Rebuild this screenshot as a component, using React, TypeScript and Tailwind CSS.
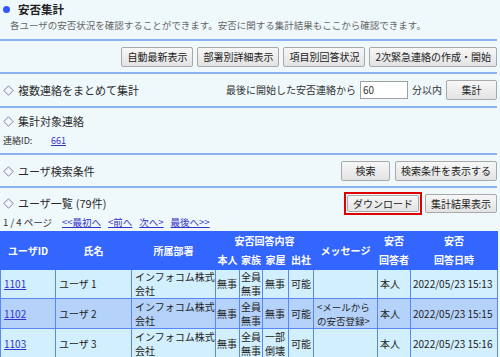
import React from "react";

const font = { fontFamily: '"Noto Sans CJK JP", "Noto Sans", sans-serif' };

function Btn({
  children,
  className = "",
  h = "h-[20px]",
}: {
  children: React.ReactNode;
  className?: string;
  h?: string;
}) {
  return (
    <button
      className={
        h +
        " px-[5px] border border-[#a9a9a9] rounded-[2px] bg-gradient-to-b from-[#f7f7f7] to-[#e3e3e3] text-[10px] leading-none text-[#222] whitespace-nowrap " +
        className
      }
    >
      {children}
    </button>
  );
}

function Line() {
  return <div className="h-[2px] bg-[#8db2f2]" />;
}

function Heading({ children }: { children: React.ReactNode }) {
  return (
    <div className="flex items-center text-[11px] leading-none text-[#2a2a2a]">
      <svg width="11" height="11" viewBox="0 0 11 11" className="ml-[3px] mr-[4px]">
        <path d="M5.5 0.8 L10.2 5.5 L5.5 10.2 L0.8 5.5 Z" fill="none" stroke="#8a7aa8" strokeWidth="1" />
      </svg>
      {children}
    </div>
  );
}

const rows = [
  { id: "1101", name: "ユーザ 1", fam: ["全員", "無事"], house: ["無事"], msg: [], time: "2022/05/23 15:13", bg: "bg-[#d2effd]" },
  { id: "1102", name: "ユーザ 2", fam: ["全員", "無事"], house: ["無事"], msg: ["<メールから", "の安否登録>"], time: "2022/05/23 15:15", bg: "bg-[#b5d3fa]" },
  { id: "1103", name: "ユーザ 3", fam: ["全員", "無事"], house: ["一部", "倒壊"], msg: [], time: "2022/05/23 15:16", bg: "bg-[#d2effd]" },
];

export default function App() {
  return (
    <div className="w-[500px] h-[357px] overflow-hidden bg-[#eff8fb]" style={font}>
      <div className="w-[497px]">
        {/* title */}
        <div className="h-[19px] flex items-center pl-[3px]">
          <span className="w-[7px] h-[7px] rounded-full bg-[#3355ff] mr-[8px]" />
          <span className="text-[11.5px] font-bold text-[#222] leading-none">安否集計</span>
        </div>
        <div className="h-[13px] pl-[10px] flex items-center text-[9.5px] text-[#666] leading-none">
          各ユーザの安否状況を確認することができます。安否に関する集計結果もここから確認できます。
        </div>
        <div className="h-[7px]" />
        <Line />
        {/* button row */}
        <div className="pt-[6px] pb-[5px] flex justify-end gap-[4px]">
          <Btn>自動最新表示</Btn>
          <Btn>部署別詳細表示</Btn>
          <Btn>項目別回答状況</Btn>
          <Btn>2次緊急連絡の作成・開始</Btn>
        </div>
        <Line />
        {/* multi */}
        <div className="pt-[6px] pb-[6px] flex items-center justify-between">
          <Heading>複数連絡をまとめて集計</Heading>
          <div className="flex items-center text-[10px] text-[#333] leading-none">
            <span>最後に開始した安否連絡から</span>
            <div className="ml-[4px] w-[48px] h-[18px] border border-[#a0a0a0] bg-white flex items-center px-[2px] text-[10px]">
              60
            </div>
            <span className="ml-[4px] mr-[4px]">分以内</span>
            <Btn className="w-[51px]">集計</Btn>
          </div>
        </div>
        <Line />
        {/* target */}
        <div className="pt-[5px] pb-[6px]">
          <div className="h-[16px] flex items-center">
            <Heading>集計対象連絡</Heading>
          </div>
          <div className="mt-[4px] h-[14px] flex items-center pl-[3px] text-[9px] text-[#333] leading-none">
            <span className="w-[48px]">連絡ID:</span>
            <a className="text-[#3333cc] underline">661</a>
          </div>
        </div>
        <Line />
        {/* search */}
        <div className="pt-[6px] pb-[5px] flex items-center justify-between">
          <Heading>ユーザ検索条件</Heading>
          <div className="flex gap-[5px]">
            <Btn className="w-[49px]">検索</Btn>
            <Btn>検索条件を表示する</Btn>
          </div>
        </div>
        <Line />
        {/* list */}
        <div className="pt-[4px] flex items-center justify-between">
          <Heading>
            ユーザ一覧 <span className="ml-[3px]">(79件)</span>
          </Heading>
          <div className="flex items-center gap-[3px]">
            <div className="border-[2px] border-[#e00000] p-[1px] flex">
              <Btn h="h-[17px]">ダウンロード</Btn>
            </div>
            <Btn h="h-[19px]">集計結果表示</Btn>
          </div>
        </div>
        <div className="mt-[1px] h-[13px] flex items-center pl-[3px] text-[9.5px] leading-none text-[#333] gap-[7px]">
          <span className="mr-[3px]">1 / 4 ページ</span>
          <a className="text-[#3333cc] underline">&lt;&lt;最初へ</a>
          <a className="text-[#3333cc] underline">&lt;前へ</a>
          <a className="text-[#3333cc] underline">次へ&gt;</a>
          <a className="text-[#3333cc] underline">最後へ&gt;&gt;</a>
        </div>
        <div className="h-[2px]" />
        {/* table */}
        <table className="border-collapse table-fixed w-[497px] text-[10px] leading-[14px]">
          <colgroup>
            <col className="w-[55px]" />
            <col className="w-[76px]" />
            <col className="w-[84px]" />
            <col className="w-[24px]" />
            <col className="w-[23px]" />
            <col className="w-[26px]" />
            <col className="w-[25px]" />
            <col className="w-[64px]" />
            <col className="w-[33px]" />
            <col className="w-[87px]" />
          </colgroup>
          <thead>
            <tr className="bg-[#3366ff] text-white font-bold h-[19px]">
              <th rowSpan={2} className="p-0 border border-[#3366ff]">ユーザID</th>
              <th rowSpan={2} className="p-0 border border-[#3366ff]">氏名</th>
              <th rowSpan={2} className="p-0 border border-[#3366ff]">所属部署</th>
              <th colSpan={4} className="p-0 border border-[#3366ff]">安否回答内容</th>
              <th rowSpan={2} className="p-0 border border-[#3366ff]">メッセージ</th>
              <th className="p-0 border border-[#3366ff]">安否</th>
              <th className="p-0 border border-[#3366ff]">安否</th>
            </tr>
            <tr className="bg-[#3366ff] text-white font-bold h-[19px]">
              <th className="p-0 border border-[#3366ff] whitespace-nowrap">本人</th>
              <th className="p-0 border border-[#3366ff] whitespace-nowrap">家族</th>
              <th className="p-0 border border-[#3366ff] whitespace-nowrap">家屋</th>
              <th className="p-0 border border-[#3366ff] whitespace-nowrap">出社</th>
              <th className="p-0 border border-[#3366ff] whitespace-nowrap">回答者</th>
              <th className="p-0 border border-[#3366ff] whitespace-nowrap">回答日時</th>
            </tr>
          </thead>
          <tbody className="text-[#222]">
            {rows.map((r, i) => (
              <tr key={r.id} className={r.bg + (i === 0 ? " h-[29px]" : " h-[30px]")}>
                <td className="p-0 pl-[3px] border border-[#5a86f8]">
                  <a className="text-[#3333cc] underline">{r.id}</a>
                </td>
                <td className="p-0 pl-[3px] border border-[#5a86f8]">{r.name}</td>
                <td className="p-0 pl-[3px] border border-[#5a86f8]">
                  インフォコム株式
                  <br />
                  会社
                </td>
                <td className="p-0 pl-[1px] border border-[#5a86f8]">無事</td>
                <td className="p-0 pl-[1px] border border-[#5a86f8]">
                  {r.fam[0]}
                  <br />
                  {r.fam[1]}
                </td>
                <td className="p-0 pl-[2px] border border-[#5a86f8]">
                  {r.house[0]}
                  {r.house[1] && (
                    <>
                      <br />
                      {r.house[1]}
                    </>
                  )}
                </td>
                <td className="p-0 pl-[2px] border border-[#5a86f8]">可能</td>
                <td className="p-0 pl-[3px] border border-[#5a86f8] text-[9.5px]">
                  {r.msg.length > 0 && (
                    <>
                      {r.msg[0]}
                      <br />
                      {r.msg[1]}
                    </>
                  )}
                </td>
                <td className="p-0 pl-[2px] border border-[#5a86f8]">本人</td>
                <td className="p-0 pl-[2px] border border-[#5a86f8] whitespace-nowrap">{r.time}</td>
              </tr>
            ))}
          </tbody>
        </table>
      </div>
    </div>
  );
}
